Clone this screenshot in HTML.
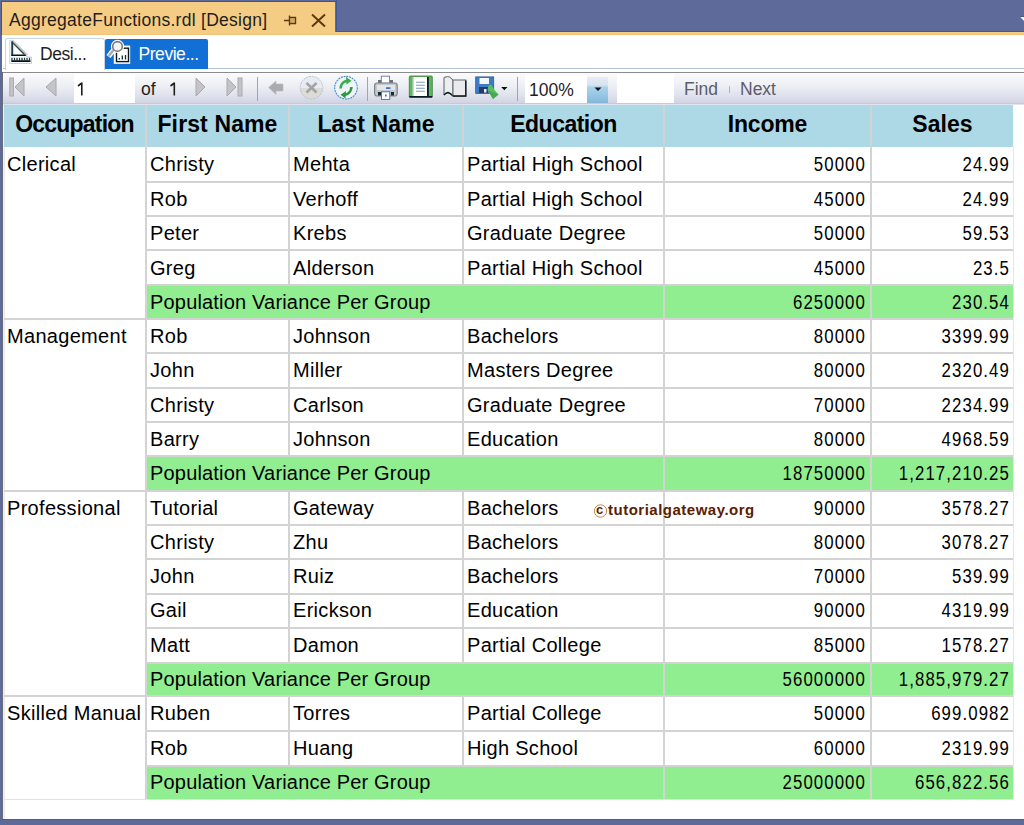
<!DOCTYPE html>
<html><head><meta charset="utf-8">
<style>
html,body{margin:0;padding:0;}
body{width:1024px;height:825px;position:relative;overflow:hidden;background:#5d6a9a;font-family:"Liberation Sans",sans-serif;}
.a{position:absolute;}
.tx{position:absolute;font-size:20px;color:#000;letter-spacing:0.3px;white-space:nowrap;}
.nm{position:absolute;font-size:20px;color:#000;letter-spacing:1.3px;white-space:nowrap;transform:scaleX(0.84);transform-origin:100% 50%;}
.hd{position:absolute;margin-top:-2.5px;font-size:23px;font-weight:bold;color:#000;letter-spacing:-0.9px;white-space:nowrap;}
</style></head><body>
<!-- title tab -->
<div class="a" style="left:1px;top:1px;width:336px;height:1px;background:#34589a;"></div>
<div class="a" style="left:1px;top:1px;width:1px;height:34px;background:#34589a;"></div>
<div class="a" style="left:2px;top:2px;width:333px;height:30px;background:#f5cc84;"></div>
<div class="a" style="left:336px;top:0px;width:1px;height:31px;background:#3c5a9c;"></div>
<div class="a" style="left:336px;top:31px;width:688px;height:1px;background:#3c5a9c;"></div>
<div class="a" style="left:2px;top:32px;width:1022px;height:3px;background:#f5cc84;"></div>
<div class="a" style="left:2px;top:34px;width:1022px;height:1px;background:#f0c478;"></div>
<div class="a" style="left:9px;top:8px;font-size:17.5px;letter-spacing:0.27px;color:#1e1e1e;line-height:24px;white-space:nowrap;">AggregateFunctions.rdl [Design]</div>
<svg class="a" style="left:282px;top:13px" width="16" height="14" viewBox="0 0 16 14"><path d="M2 7.5H7.5M7.5 2.5V12.5M8 4.5H13.5V10.5H8" fill="none" stroke="#5a3a10" stroke-width="1.4"/><rect x="8" y="5" width="5" height="5" fill="#b08850" opacity="0.5"/></svg>
<svg class="a" style="left:310px;top:13px" width="17" height="15" viewBox="0 0 17 15"><path d="M2 1.5L15 13.5M15 1.5L2 13.5" stroke="#5a3a10" stroke-width="2"/></svg>
<svg class="a" style="left:1020px;top:16px" width="8" height="6" viewBox="0 0 8 6"><path d="M0 0.8H8L4 5Z" fill="#fff"/><rect x="0" y="0" width="8" height="1" fill="#3a5aa0"/></svg>
<!-- content area white -->
<div class="a" style="left:2px;top:35px;width:1022px;height:784px;background:#fff;"></div>
<div class="a" style="left:2px;top:72px;width:1px;height:747px;background:#6a6e7a;"></div>
<div class="a" style="left:3px;top:105px;width:1px;height:714px;background:#f0f1f5;"></div>
<div class="a" style="left:4px;top:147px;width:1px;height:672px;background:#e8e9ed;"></div>
<!-- design/preview row -->
<div class="a" style="left:5px;top:38px;width:98px;height:31px;background:#fff;border:1px solid #ccd4e2;border-bottom:none;border-radius:3px 3px 0 0;"></div>
<div class="a" style="left:105px;top:39px;width:103px;height:30px;background:#1170d6;border-radius:2px 2px 0 0;"></div>
<div class="a" style="left:3px;top:68px;width:3px;height:1px;background:#b4c4dc;"></div><div class="a" style="left:208px;top:68px;width:816px;height:1px;background:#b4c4dc;"></div>
<div class="a" style="left:3px;top:71.5px;width:1021px;height:1.5px;background:#8c8c8c;"></div>
<div class="a" style="left:40px;top:42px;font-size:17.5px;letter-spacing:-0.45px;color:#1e1e1e;line-height:24px;white-space:nowrap;">Desi...</div>
<div class="a" style="left:138.5px;top:42px;font-size:17.5px;letter-spacing:-0.45px;color:#fff;line-height:24px;white-space:nowrap;">Previe...</div>
<!-- design icon -->
<svg class="a" style="left:6px;top:38px" width="30" height="30" viewBox="0 0 30 30">
<path d="M3.8 2.5V25.5H25.5V19H21.5L20 17.5L5 2.5Z" fill="#fff" stroke="#c9cde6" stroke-width="1"/>
<path d="M5.3 3.3L5.3 17.8L19.8 17.8Z" fill="#d4d8dc"/>
<path d="M5.8 2.5L21 17.5" stroke="#c4c8cc" stroke-width="3"/>
<path d="M6 4L18.5 16.5" stroke="#2a4848" stroke-width="1.2"/>
<path d="M8.2 7.5V16H16.5Z" fill="#fff"/>
<rect x="5.3" y="3.3" width="1.7" height="14.5" fill="#1f3c3c"/>
<rect x="5.3" y="16.6" width="14.5" height="1.4" fill="#0e1616"/>
<rect x="5.3" y="22.2" width="19.2" height="1.8" fill="#0a1020"/>
<path d="M6 19.8V22.5M8.5 19.8V22.5M11 19.8V22.5M13.5 19.8V22.5M16 19.8V22.5M18.5 19.8V22.5M21 19.8V22.5M23.5 19.8V22.5" stroke="#1f3c3c" stroke-width="1.3"/>
</svg>
<!-- preview icon -->
<svg class="a" style="left:104px;top:38px" width="32" height="30" viewBox="0 0 32 30">
<rect x="9.8" y="7.6" width="16.4" height="18.2" fill="#fff"/>
<rect x="12.5" y="10.2" width="12" height="13.4" fill="#fff" stroke="#0a1a1a" stroke-width="1.4"/>
<path d="M15.3 21.5V20M18.3 21.5V17.5M21.5 21.5V17" stroke="#0a2a2a" stroke-width="1.3"/>
<circle cx="13.5" cy="8.4" r="6.6" fill="#fff"/>
<path d="M9.5 12L4.5 18.5" stroke="#fff" stroke-width="5"/>
<path d="M9.5 12L4.8 18" stroke="#a8acae" stroke-width="2.4"/>
<circle cx="13.5" cy="8.4" r="4.8" fill="#f4f4f4" stroke="#7a7a72" stroke-width="1.6"/>
</svg>
<!-- toolbar -->
<div class="a" style="left:3px;top:73px;width:1021px;height:30px;background:linear-gradient(#fbfbfc,#eef0f5 40%,#dfe2ec 75%,#d0d3e2);"></div>
<div class="a" style="left:3px;top:103px;width:1021px;height:1px;background:#c6cad6;"></div>
<div class="a" style="left:3px;top:104px;width:1021px;height:1px;background:#dfe4ec;"></div>
<div class="a" style="left:74px;top:74px;width:61px;height:29px;background:#fff;"></div>
<svg class="a" style="left:76px;top:80px" width="10" height="18" viewBox="0 0 10 18"><path d="M5.8 2.6V15.5M5.8 3L2 6" fill="none" stroke="#1e1e1e" stroke-width="1.6"/></svg>
<div class="a" style="left:141px;top:77px;font-size:17.5px;color:#1e1e1e;line-height:24px;white-space:nowrap;">of</div><svg class="a" style="left:168px;top:80px" width="10" height="18" viewBox="0 0 10 18"><path d="M6.3 2.6V15.5M6.3 3L2.5 6" fill="none" stroke="#1e1e1e" stroke-width="1.6"/></svg>
<!-- nav icons -->
<svg class="a" style="left:8px;top:77px" width="18" height="20" viewBox="0 0 18 20"><rect x="1.8" y="1" width="3.6" height="18" fill="#c4c4c8" stroke="#a8a8ae" stroke-width="1"/><path d="M16 1V19L7 10Z" fill="#c4c4c8" stroke="#a8a8ae" stroke-width="1"/></svg>
<svg class="a" style="left:44px;top:77px" width="14" height="20" viewBox="0 0 14 20"><path d="M12 1V19L2 10Z" fill="#c4c4c8" stroke="#a8a8ae" stroke-width="1"/></svg>
<svg class="a" style="left:194px;top:77px" width="14" height="20" viewBox="0 0 14 20"><path d="M2 1V19L11 10Z" fill="#c4c4c8" stroke="#a8a8ae" stroke-width="1"/></svg>
<svg class="a" style="left:226px;top:77px" width="18" height="20" viewBox="0 0 18 20"><path d="M1 1V19L10 10Z" fill="#c4c4c8" stroke="#a8a8ae" stroke-width="1"/><rect x="12" y="1" width="4" height="18" fill="#c4c4c8" stroke="#a8a8ae" stroke-width="1"/></svg>
<div class="a" style="left:257px;top:77px;width:1px;height:24px;background:#a0a4b0;"></div>
<svg class="a" style="left:262px;top:72px" width="104" height="30" viewBox="0 0 104 30">
<path d="M6.6 15.5L14 9V12H21V19H14V22.5Z" fill="#a8acb0" stroke="#b8bcc0" stroke-width="0.6"/>
<defs><linearGradient id="sg" x1="0" y1="0" x2="0" y2="1"><stop offset="0.5" stop-color="#e8ebf2"/><stop offset="0.5" stop-color="#dcdbd6"/></linearGradient></defs>
<circle cx="49.5" cy="15.7" r="11.3" fill="url(#sg)" stroke="#b8c4d4" stroke-width="1" stroke-dasharray="2 0.8"/>
<path d="M44.5 11L54.5 20.5M54.5 11L44.5 20.5" stroke="#a4a4a4" stroke-width="2.6"/>
<circle cx="84" cy="15.7" r="11.3" fill="#eef4fa" stroke="#4a8cc8" stroke-width="1.1" stroke-dasharray="2 0.8"/>
<path d="M78.5 16.5Q79 10 85.5 8.5" fill="none" stroke="#3cae48" stroke-width="2.6"/>
<path d="M84 5L89.5 8.8L84.5 12.5Z" fill="#3cae48"/>
<path d="M89.5 15Q89 21.5 82.5 23" fill="none" stroke="#2e9a3c" stroke-width="2.6"/>
<path d="M84 19L78.5 22.8L83.5 26.5Z" fill="#2e9a3c"/>
</svg>
<div class="a" style="left:367px;top:77px;width:1px;height:24px;background:#a0a4b0;"></div>
<!-- printer -->
<svg class="a" style="left:370px;top:72px" width="30" height="30" viewBox="0 0 30 30">
<rect x="8" y="8" width="15" height="4" fill="#6a7078"/>
<rect x="11.3" y="4.2" width="8.3" height="7" fill="#fff" stroke="#6878a8" stroke-width="0.9"/>
<rect x="4.6" y="11" width="22.6" height="13" rx="2.5" fill="#c4c8cc" stroke="#808488" stroke-width="1.2"/>
<rect x="7" y="13" width="18" height="5" fill="#e4e6e8"/>
<rect x="16" y="15.2" width="4.5" height="1.8" fill="#3a7ad0"/>
<rect x="8" y="20" width="3" height="3.5" fill="#0e3030"/>
<rect x="21" y="20" width="3" height="3.5" fill="#0e3030"/>
<rect x="11.5" y="19.8" width="8.3" height="7.6" fill="#fff" stroke="#5068b0" stroke-width="0.9"/>
<rect x="15" y="22.5" width="1.6" height="2" fill="#2a6ad0"/>
</svg>
<!-- page layout -->
<svg class="a" style="left:404px;top:72px" width="32" height="30" viewBox="0 0 32 30">
<rect x="5.3" y="4" width="23" height="21.5" rx="1" fill="#5cb85a" stroke="#3a7a3a" stroke-width="0.8"/>
<rect x="9.5" y="5" width="13.5" height="19" fill="#fff"/>
<rect x="8.5" y="5" width="1.5" height="19" fill="#d0d4d8"/>
<path d="M12 10.3H20.8M12 13.3H20.8M12 16.3H20.8M12 19.3H20.8" stroke="#7a9ac8" stroke-width="1.1"/>
<rect x="23" y="5" width="1.8" height="20" fill="#0a1a24"/>
<rect x="5.3" y="24" width="23" height="1.5" fill="#0a1a24"/>
</svg>
<!-- page setup -->
<svg class="a" style="left:440px;top:72px" width="30" height="30" viewBox="0 0 30 30">
<path d="M4 5.5Q8 4 9.5 5L13 8V24Q11 21.5 8 20.5Q5.5 21 4 23Z" fill="#eceef0" stroke="#586068" stroke-width="1"/>
<path d="M4 23Q5.5 21 8 20.5Q11 21.5 13 24" fill="none" stroke="#0a2020" stroke-width="1.4"/>
<rect x="13" y="8" width="12.8" height="16.2" fill="#e8eaee" stroke="#60666c" stroke-width="1"/>
<path d="M13 24H25.8V8.5" fill="none" stroke="#101818" stroke-width="1.4"/>
</svg>
<!-- save -->
<svg class="a" style="left:470px;top:72px" width="42" height="30" viewBox="0 0 42 30">
<rect x="5.7" y="4.9" width="18" height="16.5" fill="#3c7cc4" stroke="#2a5a9c" stroke-width="0.8"/>
<rect x="9.5" y="6" width="9.5" height="6" fill="#f4f6fa"/>
<rect x="9" y="15" width="9" height="6" fill="#283a6a"/>
<rect x="14" y="17" width="2.5" height="3.5" fill="#e8ecf0"/>
<path d="M18.5 13.5L21 12.5L24.5 18L28.5 22.5L23 27L17.5 18Z" fill="#58c060"/>
<path d="M17.5 18L28.5 22.5L23 27Z" fill="#4aa850"/>
<path d="M31.2 15H37.5L34.3 18.2Z" fill="#0a0a0a"/>
</svg>
<div class="a" style="left:517px;top:77px;width:1px;height:24px;background:#a0a4b0;"></div>
<!-- zoom box -->
<div class="a" style="left:525px;top:75px;width:62px;height:28px;background:#fff;"></div>
<div class="a" style="left:587px;top:77px;width:21px;height:26px;background:linear-gradient(#e6ecf4,#d8e4f0 30%,#a8d2ea 40%,#94c4e4 75%,#84b4d8);"></div>
<svg class="a" style="left:594px;top:87px" width="9" height="5" viewBox="0 0 9 5"><path d="M0.5 0.5H7.5L4 4Z" fill="#111"/></svg>
<div class="a" style="left:529px;top:78px;font-size:17.5px;color:#1e1e1e;line-height:24px;">100%</div>
<!-- search -->
<div class="a" style="left:617px;top:74px;width:57px;height:29px;background:#fff;"></div>
<div class="a" style="left:684px;top:77px;font-size:17.5px;color:#5c5c6c;line-height:24px;white-space:nowrap;">Find</div>
<div class="a" style="left:729px;top:86px;width:1px;height:7px;background:#b0b4c0;"></div>
<div class="a" style="left:740px;top:77px;font-size:17.5px;color:#5c5c6c;line-height:24px;white-space:nowrap;">Next</div>
<!-- table -->
<div style="position:absolute;left:4px;top:105px;width:1009px;height:42px;background:#add8e6;"></div>
<div class="hd" style="left:4px;top:105px;width:141px;height:42px;line-height:42px;text-align:center;letter-spacing:-0.81px">Occupation</div>
<div class="hd" style="left:147px;top:105px;width:141px;height:42px;line-height:42px;text-align:center;letter-spacing:0.12px">First Name</div>
<div class="hd" style="left:290px;top:105px;width:172px;height:42px;line-height:42px;text-align:center;letter-spacing:0.09px">Last Name</div>
<div class="hd" style="left:464px;top:105px;width:199px;height:42px;line-height:42px;text-align:center;letter-spacing:-0.52px">Education</div>
<div class="hd" style="left:665px;top:105px;width:205px;height:42px;line-height:42px;text-align:center;letter-spacing:-0.18px">Income</div>
<div class="hd" style="left:872px;top:105px;width:141px;height:42px;line-height:42px;text-align:center;letter-spacing:0.07px">Sales</div>
<div style="position:absolute;left:145px;top:105px;width:2px;height:42px;background:#d3d3d3;"></div>
<div style="position:absolute;left:288px;top:105px;width:2px;height:42px;background:#d3d3d3;"></div>
<div style="position:absolute;left:462px;top:105px;width:2px;height:42px;background:#d3d3d3;"></div>
<div style="position:absolute;left:663px;top:105px;width:2px;height:42px;background:#d3d3d3;"></div>
<div style="position:absolute;left:870px;top:105px;width:2px;height:42px;background:#d3d3d3;"></div>
<div class="tx" style="left:150px;top:147.3px;width:138px;height:34.80px;line-height:34.80px;text-align:left">Christy</div>
<div class="tx" style="left:293px;top:147.3px;width:169px;height:34.80px;line-height:34.80px;text-align:left">Mehta</div>
<div class="tx" style="left:467px;top:147.3px;width:196px;height:34.80px;line-height:34.80px;text-align:left">Partial High School</div>
<div class="nm" style="left:665px;top:147.3px;width:201px;height:34.80px;line-height:34.80px;text-align:right">50000</div>
<div class="nm" style="left:872px;top:147.3px;width:138px;height:34.80px;line-height:34.80px;text-align:right">24.99</div>
<div class="tx" style="left:150px;top:182.1px;width:138px;height:34.10px;line-height:34.10px;text-align:left">Rob</div>
<div class="tx" style="left:293px;top:182.1px;width:169px;height:34.10px;line-height:34.10px;text-align:left">Verhoff</div>
<div class="tx" style="left:467px;top:182.1px;width:196px;height:34.10px;line-height:34.10px;text-align:left">Partial High School</div>
<div class="nm" style="left:665px;top:182.1px;width:201px;height:34.10px;line-height:34.10px;text-align:right">45000</div>
<div class="nm" style="left:872px;top:182.1px;width:138px;height:34.10px;line-height:34.10px;text-align:right">24.99</div>
<div class="tx" style="left:150px;top:216.2px;width:138px;height:34.30px;line-height:34.30px;text-align:left">Peter</div>
<div class="tx" style="left:293px;top:216.2px;width:169px;height:34.30px;line-height:34.30px;text-align:left">Krebs</div>
<div class="tx" style="left:467px;top:216.2px;width:196px;height:34.30px;line-height:34.30px;text-align:left">Graduate Degree</div>
<div class="nm" style="left:665px;top:216.2px;width:201px;height:34.30px;line-height:34.30px;text-align:right">50000</div>
<div class="nm" style="left:872px;top:216.2px;width:138px;height:34.30px;line-height:34.30px;text-align:right">59.53</div>
<div class="tx" style="left:150px;top:250.5px;width:138px;height:34.50px;line-height:34.50px;text-align:left">Greg</div>
<div class="tx" style="left:293px;top:250.5px;width:169px;height:34.50px;line-height:34.50px;text-align:left">Alderson</div>
<div class="tx" style="left:467px;top:250.5px;width:196px;height:34.50px;line-height:34.50px;text-align:left">Partial High School</div>
<div class="nm" style="left:665px;top:250.5px;width:201px;height:34.50px;line-height:34.50px;text-align:right">45000</div>
<div class="nm" style="left:872px;top:250.5px;width:138px;height:34.50px;line-height:34.50px;text-align:right">23.5</div>
<div style="position:absolute;left:147px;top:286px;width:866px;height:32px;background:#90ee90;"></div>
<div style="position:absolute;left:663px;top:286px;width:2px;height:32px;background:#d3d3d3;"></div>
<div style="position:absolute;left:870px;top:286px;width:2px;height:32px;background:#d3d3d3;"></div>
<div class="tx" style="left:150px;top:285px;width:400px;height:34.00px;line-height:34.00px;letter-spacing:0.18px">Population Variance Per Group</div>
<div class="nm" style="left:665px;top:285px;width:201px;height:34.00px;line-height:34.00px;text-align:right">6250000</div>
<div class="nm" style="left:872px;top:285px;width:138px;height:34.00px;line-height:34.00px;text-align:right">230.54</div>
<div class="tx" style="left:7px;top:147.3px;width:140px;height:34.80px;line-height:34.80px">Clerical</div>
<div class="tx" style="left:150px;top:319px;width:138px;height:34.30px;line-height:34.30px;text-align:left">Rob</div>
<div class="tx" style="left:293px;top:319px;width:169px;height:34.30px;line-height:34.30px;text-align:left">Johnson</div>
<div class="tx" style="left:467px;top:319px;width:196px;height:34.30px;line-height:34.30px;text-align:left">Bachelors</div>
<div class="nm" style="left:665px;top:319px;width:201px;height:34.30px;line-height:34.30px;text-align:right">80000</div>
<div class="nm" style="left:872px;top:319px;width:138px;height:34.30px;line-height:34.30px;text-align:right">3399.99</div>
<div class="tx" style="left:150px;top:353.3px;width:138px;height:34.60px;line-height:34.60px;text-align:left">John</div>
<div class="tx" style="left:293px;top:353.3px;width:169px;height:34.60px;line-height:34.60px;text-align:left">Miller</div>
<div class="tx" style="left:467px;top:353.3px;width:196px;height:34.60px;line-height:34.60px;text-align:left">Masters Degree</div>
<div class="nm" style="left:665px;top:353.3px;width:201px;height:34.60px;line-height:34.60px;text-align:right">80000</div>
<div class="nm" style="left:872px;top:353.3px;width:138px;height:34.60px;line-height:34.60px;text-align:right">2320.49</div>
<div class="tx" style="left:150px;top:387.9px;width:138px;height:34.00px;line-height:34.00px;text-align:left">Christy</div>
<div class="tx" style="left:293px;top:387.9px;width:169px;height:34.00px;line-height:34.00px;text-align:left">Carlson</div>
<div class="tx" style="left:467px;top:387.9px;width:196px;height:34.00px;line-height:34.00px;text-align:left">Graduate Degree</div>
<div class="nm" style="left:665px;top:387.9px;width:201px;height:34.00px;line-height:34.00px;text-align:right">70000</div>
<div class="nm" style="left:872px;top:387.9px;width:138px;height:34.00px;line-height:34.00px;text-align:right">2234.99</div>
<div class="tx" style="left:150px;top:421.9px;width:138px;height:34.10px;line-height:34.10px;text-align:left">Barry</div>
<div class="tx" style="left:293px;top:421.9px;width:169px;height:34.10px;line-height:34.10px;text-align:left">Johnson</div>
<div class="tx" style="left:467px;top:421.9px;width:196px;height:34.10px;line-height:34.10px;text-align:left">Education</div>
<div class="nm" style="left:665px;top:421.9px;width:201px;height:34.10px;line-height:34.10px;text-align:right">80000</div>
<div class="nm" style="left:872px;top:421.9px;width:138px;height:34.10px;line-height:34.10px;text-align:right">4968.59</div>
<div style="position:absolute;left:147px;top:457px;width:866px;height:33px;background:#90ee90;"></div>
<div style="position:absolute;left:663px;top:457px;width:2px;height:33px;background:#d3d3d3;"></div>
<div style="position:absolute;left:870px;top:457px;width:2px;height:33px;background:#d3d3d3;"></div>
<div class="tx" style="left:150px;top:456px;width:400px;height:34.70px;line-height:34.70px;letter-spacing:0.18px">Population Variance Per Group</div>
<div class="nm" style="left:665px;top:456px;width:201px;height:34.70px;line-height:34.70px;text-align:right">18750000</div>
<div class="nm" style="left:872px;top:456px;width:138px;height:34.70px;line-height:34.70px;text-align:right">1,217,210.25</div>
<div class="tx" style="left:7px;top:319px;width:140px;height:34.30px;line-height:34.30px">Management</div>
<div class="tx" style="left:150px;top:490.7px;width:138px;height:34.30px;line-height:34.30px;text-align:left">Tutorial</div>
<div class="tx" style="left:293px;top:490.7px;width:169px;height:34.30px;line-height:34.30px;text-align:left">Gateway</div>
<div class="tx" style="left:467px;top:490.7px;width:196px;height:34.30px;line-height:34.30px;text-align:left">Bachelors</div>
<div class="nm" style="left:665px;top:490.7px;width:201px;height:34.30px;line-height:34.30px;text-align:right">90000</div>
<div class="nm" style="left:872px;top:490.7px;width:138px;height:34.30px;line-height:34.30px;text-align:right">3578.27</div>
<div class="tx" style="left:150px;top:525px;width:138px;height:34.20px;line-height:34.20px;text-align:left">Christy</div>
<div class="tx" style="left:293px;top:525px;width:169px;height:34.20px;line-height:34.20px;text-align:left">Zhu</div>
<div class="tx" style="left:467px;top:525px;width:196px;height:34.20px;line-height:34.20px;text-align:left">Bachelors</div>
<div class="nm" style="left:665px;top:525px;width:201px;height:34.20px;line-height:34.20px;text-align:right">80000</div>
<div class="nm" style="left:872px;top:525px;width:138px;height:34.20px;line-height:34.20px;text-align:right">3078.27</div>
<div class="tx" style="left:150px;top:559.2px;width:138px;height:34.40px;line-height:34.40px;text-align:left">John</div>
<div class="tx" style="left:293px;top:559.2px;width:169px;height:34.40px;line-height:34.40px;text-align:left">Ruiz</div>
<div class="tx" style="left:467px;top:559.2px;width:196px;height:34.40px;line-height:34.40px;text-align:left">Bachelors</div>
<div class="nm" style="left:665px;top:559.2px;width:201px;height:34.40px;line-height:34.40px;text-align:right">70000</div>
<div class="nm" style="left:872px;top:559.2px;width:138px;height:34.40px;line-height:34.40px;text-align:right">539.99</div>
<div class="tx" style="left:150px;top:593.6px;width:138px;height:33.90px;line-height:33.90px;text-align:left">Gail</div>
<div class="tx" style="left:293px;top:593.6px;width:169px;height:33.90px;line-height:33.90px;text-align:left">Erickson</div>
<div class="tx" style="left:467px;top:593.6px;width:196px;height:33.90px;line-height:33.90px;text-align:left">Education</div>
<div class="nm" style="left:665px;top:593.6px;width:201px;height:33.90px;line-height:33.90px;text-align:right">90000</div>
<div class="nm" style="left:872px;top:593.6px;width:138px;height:33.90px;line-height:33.90px;text-align:right">4319.99</div>
<div class="tx" style="left:150px;top:627.5px;width:138px;height:35.20px;line-height:35.20px;text-align:left">Matt</div>
<div class="tx" style="left:293px;top:627.5px;width:169px;height:35.20px;line-height:35.20px;text-align:left">Damon</div>
<div class="tx" style="left:467px;top:627.5px;width:196px;height:35.20px;line-height:35.20px;text-align:left">Partial College</div>
<div class="nm" style="left:665px;top:627.5px;width:201px;height:35.20px;line-height:35.20px;text-align:right">85000</div>
<div class="nm" style="left:872px;top:627.5px;width:138px;height:35.20px;line-height:35.20px;text-align:right">1578.27</div>
<div style="position:absolute;left:147px;top:664px;width:866px;height:31px;background:#90ee90;"></div>
<div style="position:absolute;left:663px;top:664px;width:2px;height:31px;background:#d3d3d3;"></div>
<div style="position:absolute;left:870px;top:664px;width:2px;height:31px;background:#d3d3d3;"></div>
<div class="tx" style="left:150px;top:662.7px;width:400px;height:33.60px;line-height:33.60px;letter-spacing:0.18px">Population Variance Per Group</div>
<div class="nm" style="left:665px;top:662.7px;width:201px;height:33.60px;line-height:33.60px;text-align:right">56000000</div>
<div class="nm" style="left:872px;top:662.7px;width:138px;height:33.60px;line-height:33.60px;text-align:right">1,885,979.27</div>
<div class="tx" style="left:7px;top:490.7px;width:140px;height:34.30px;line-height:34.30px">Professional</div>
<div class="tx" style="left:150px;top:696.3px;width:138px;height:34.70px;line-height:34.70px;text-align:left">Ruben</div>
<div class="tx" style="left:293px;top:696.3px;width:169px;height:34.70px;line-height:34.70px;text-align:left">Torres</div>
<div class="tx" style="left:467px;top:696.3px;width:196px;height:34.70px;line-height:34.70px;text-align:left">Partial College</div>
<div class="nm" style="left:665px;top:696.3px;width:201px;height:34.70px;line-height:34.70px;text-align:right">50000</div>
<div class="nm" style="left:872px;top:696.3px;width:138px;height:34.70px;line-height:34.70px;text-align:right">699.0982</div>
<div class="tx" style="left:150px;top:731px;width:138px;height:34.50px;line-height:34.50px;text-align:left">Rob</div>
<div class="tx" style="left:293px;top:731px;width:169px;height:34.50px;line-height:34.50px;text-align:left">Huang</div>
<div class="tx" style="left:467px;top:731px;width:196px;height:34.50px;line-height:34.50px;text-align:left">High School</div>
<div class="nm" style="left:665px;top:731px;width:201px;height:34.50px;line-height:34.50px;text-align:right">60000</div>
<div class="nm" style="left:872px;top:731px;width:138px;height:34.50px;line-height:34.50px;text-align:right">2319.99</div>
<div style="position:absolute;left:147px;top:767px;width:866px;height:32px;background:#90ee90;"></div>
<div style="position:absolute;left:663px;top:767px;width:2px;height:32px;background:#d3d3d3;"></div>
<div style="position:absolute;left:870px;top:767px;width:2px;height:32px;background:#d3d3d3;"></div>
<div class="tx" style="left:150px;top:765.5px;width:400px;height:33.70px;line-height:33.70px;letter-spacing:0.18px">Population Variance Per Group</div>
<div class="nm" style="left:665px;top:765.5px;width:201px;height:33.70px;line-height:33.70px;text-align:right">25000000</div>
<div class="nm" style="left:872px;top:765.5px;width:138px;height:33.70px;line-height:33.70px;text-align:right">656,822.56</div>
<div class="tx" style="left:7px;top:696.3px;width:140px;height:34.70px;line-height:34.70px">Skilled Manual</div>
<div style="position:absolute;left:145px;top:181px;width:868px;height:2px;background:#d3d3d3;"></div>
<div style="position:absolute;left:145px;top:215px;width:868px;height:2px;background:#d3d3d3;"></div>
<div style="position:absolute;left:145px;top:249px;width:868px;height:2px;background:#d3d3d3;"></div>
<div style="position:absolute;left:145px;top:284px;width:868px;height:2px;background:#d3d3d3;"></div>
<div style="position:absolute;left:4px;top:318px;width:1009px;height:2px;background:#d3d3d3;"></div>
<div style="position:absolute;left:145px;top:352px;width:868px;height:2px;background:#d3d3d3;"></div>
<div style="position:absolute;left:145px;top:387px;width:868px;height:2px;background:#d3d3d3;"></div>
<div style="position:absolute;left:145px;top:421px;width:868px;height:2px;background:#d3d3d3;"></div>
<div style="position:absolute;left:145px;top:455px;width:868px;height:2px;background:#d3d3d3;"></div>
<div style="position:absolute;left:4px;top:490px;width:1009px;height:2px;background:#d3d3d3;"></div>
<div style="position:absolute;left:145px;top:524px;width:868px;height:2px;background:#d3d3d3;"></div>
<div style="position:absolute;left:145px;top:558px;width:868px;height:2px;background:#d3d3d3;"></div>
<div style="position:absolute;left:145px;top:593px;width:868px;height:2px;background:#d3d3d3;"></div>
<div style="position:absolute;left:145px;top:627px;width:868px;height:2px;background:#d3d3d3;"></div>
<div style="position:absolute;left:145px;top:662px;width:868px;height:2px;background:#d3d3d3;"></div>
<div style="position:absolute;left:4px;top:695px;width:1009px;height:2px;background:#d3d3d3;"></div>
<div style="position:absolute;left:145px;top:730px;width:868px;height:2px;background:#d3d3d3;"></div>
<div style="position:absolute;left:145px;top:765px;width:868px;height:2px;background:#d3d3d3;"></div>
<div style="position:absolute;left:145px;top:147px;width:2px;height:652px;background:#d3d3d3;"></div>
<div style="position:absolute;left:288px;top:147px;width:2px;height:36px;background:#d3d3d3;"></div>
<div style="position:absolute;left:462px;top:147px;width:2px;height:36px;background:#d3d3d3;"></div>
<div style="position:absolute;left:288px;top:181px;width:2px;height:36px;background:#d3d3d3;"></div>
<div style="position:absolute;left:462px;top:181px;width:2px;height:36px;background:#d3d3d3;"></div>
<div style="position:absolute;left:288px;top:215px;width:2px;height:36px;background:#d3d3d3;"></div>
<div style="position:absolute;left:462px;top:215px;width:2px;height:36px;background:#d3d3d3;"></div>
<div style="position:absolute;left:288px;top:249px;width:2px;height:37px;background:#d3d3d3;"></div>
<div style="position:absolute;left:462px;top:249px;width:2px;height:37px;background:#d3d3d3;"></div>
<div style="position:absolute;left:288px;top:318px;width:2px;height:36px;background:#d3d3d3;"></div>
<div style="position:absolute;left:462px;top:318px;width:2px;height:36px;background:#d3d3d3;"></div>
<div style="position:absolute;left:288px;top:352px;width:2px;height:37px;background:#d3d3d3;"></div>
<div style="position:absolute;left:462px;top:352px;width:2px;height:37px;background:#d3d3d3;"></div>
<div style="position:absolute;left:288px;top:387px;width:2px;height:36px;background:#d3d3d3;"></div>
<div style="position:absolute;left:462px;top:387px;width:2px;height:36px;background:#d3d3d3;"></div>
<div style="position:absolute;left:288px;top:421px;width:2px;height:36px;background:#d3d3d3;"></div>
<div style="position:absolute;left:462px;top:421px;width:2px;height:36px;background:#d3d3d3;"></div>
<div style="position:absolute;left:288px;top:490px;width:2px;height:36px;background:#d3d3d3;"></div>
<div style="position:absolute;left:462px;top:490px;width:2px;height:36px;background:#d3d3d3;"></div>
<div style="position:absolute;left:288px;top:524px;width:2px;height:36px;background:#d3d3d3;"></div>
<div style="position:absolute;left:462px;top:524px;width:2px;height:36px;background:#d3d3d3;"></div>
<div style="position:absolute;left:288px;top:558px;width:2px;height:37px;background:#d3d3d3;"></div>
<div style="position:absolute;left:462px;top:558px;width:2px;height:37px;background:#d3d3d3;"></div>
<div style="position:absolute;left:288px;top:593px;width:2px;height:36px;background:#d3d3d3;"></div>
<div style="position:absolute;left:462px;top:593px;width:2px;height:36px;background:#d3d3d3;"></div>
<div style="position:absolute;left:288px;top:627px;width:2px;height:37px;background:#d3d3d3;"></div>
<div style="position:absolute;left:462px;top:627px;width:2px;height:37px;background:#d3d3d3;"></div>
<div style="position:absolute;left:288px;top:695px;width:2px;height:37px;background:#d3d3d3;"></div>
<div style="position:absolute;left:462px;top:695px;width:2px;height:37px;background:#d3d3d3;"></div>
<div style="position:absolute;left:288px;top:730px;width:2px;height:37px;background:#d3d3d3;"></div>
<div style="position:absolute;left:462px;top:730px;width:2px;height:37px;background:#d3d3d3;"></div>
<div style="position:absolute;left:663px;top:147px;width:2px;height:652px;background:#d3d3d3;"></div>
<div style="position:absolute;left:870px;top:147px;width:2px;height:652px;background:#d3d3d3;"></div>
<div style="position:absolute;left:1013px;top:147px;width:1px;height:652px;background:#e6e6e6;"></div>
<div style="position:absolute;left:4px;top:799px;width:1009px;height:1px;background:#e2e2e2;"></div>
<!-- watermark -->
<svg class="a" style="left:593px;top:503px" width="16" height="16" viewBox="0 0 16 16"><circle cx="7.5" cy="8" r="6.2" fill="none" stroke="#c08850" stroke-width="1"/></svg>
<div class="a" style="left:596px;top:500px;font-size:13px;font-weight:bold;color:#5a2000;line-height:20px;">c</div>
<div class="a" style="left:608px;top:500px;font-size:15px;font-weight:bold;letter-spacing:0.5px;color:#5a2000;line-height:20px;white-space:nowrap;">tutorialgateway.org</div>
<!-- bottom bar -->
<div class="a" style="left:2px;top:819px;width:1022px;height:1px;background:#5a5e6a;"></div>
<div class="a" style="left:0;top:820px;width:1024px;height:5px;background:#5d6a9a;"></div>
</body></html>
